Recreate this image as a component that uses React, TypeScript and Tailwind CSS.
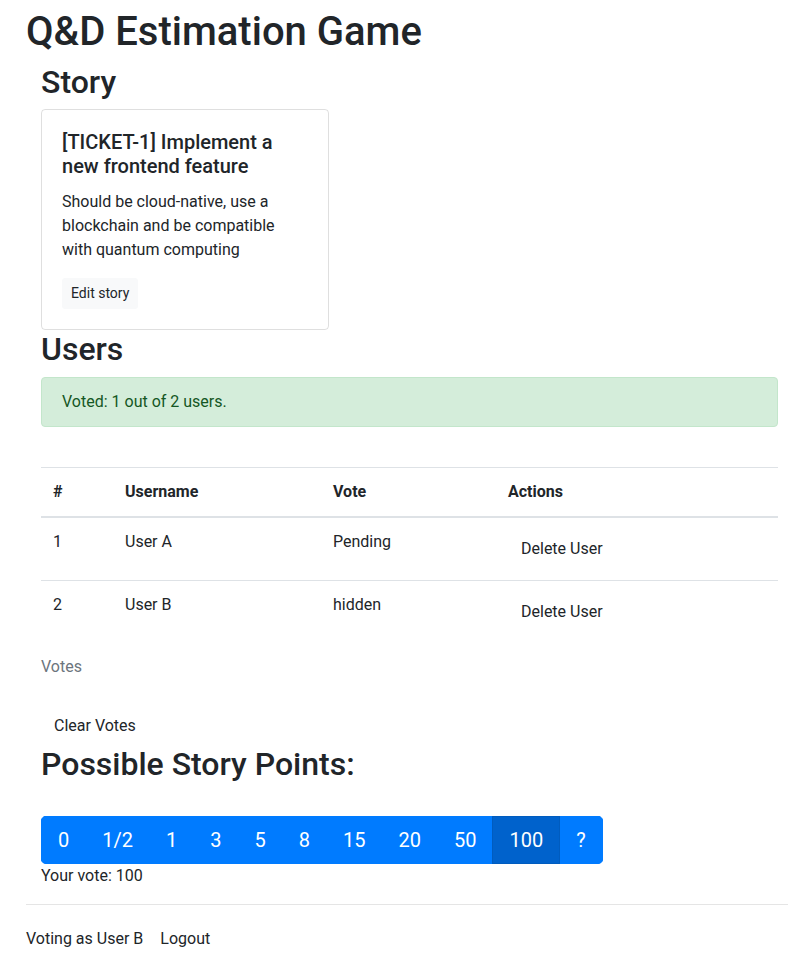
import React from 'react'

const points = ['0', '1/2', '1', '3', '5', '8', '15', '20', '50', '100', '?']

const users = [
  { id: 1, name: 'User A', vote: 'Pending' },
  { id: 2, name: 'User B', vote: 'hidden' },
]

export default function App() {
  const selected = '100'

  return (
    <div className="min-h-screen bg-white pt-2 pl-[26px] text-base leading-6 text-[#212529] [font-family:Roboto,'Liberation_Sans',sans-serif]">
      <h1 className="mb-[7px] text-[40px] leading-[48px] font-medium">Q&amp;D Estimation Game</h1>

      <div className="pr-[10px] pl-[15px]">
        <h2 className="mb-2 text-[32px] leading-[38.4px] font-medium">Story</h2>

        {/* Karte mit der aktuellen Story */}
        <div className="w-[288px] rounded border border-[rgba(0,0,0,0.125)] p-5">
          <h5 className="mb-3 text-xl leading-6 font-medium">[TICKET-1] Implement a new frontend feature</h5>
          <p className="mb-4">Should be cloud-native, use a blockchain and be compatible with quantum computing</p>
          <button className="rounded-[3px] border border-[#f8f9fa] bg-[#f8f9fa] px-2 py-1 text-sm leading-[21px] text-[#212529]">
            Edit story
          </button>
        </div>

        <h2 className="mb-2 text-[32px] leading-[38.4px] font-medium">Users</h2>
        <div className="mb-[40px] rounded border border-[#c3e6cb] bg-[#d4edda] px-5 py-3 text-[#155724]">
          Voted: 1 out of 2 users.
        </div>

        <table className="mb-4 w-full border-collapse text-left">
          <caption className="caption-bottom py-3 text-left text-[#6c757d]">Votes</caption>
          <thead>
            <tr>
              <th className="w-[72px] border-t border-b-2 border-[#dee2e6] p-3 align-bottom font-bold">#</th>
              <th className="w-[208px] border-t border-b-2 border-[#dee2e6] p-3 align-bottom font-bold">Username</th>
              <th className="w-[175px] border-t border-b-2 border-[#dee2e6] p-3 align-bottom font-bold">Vote</th>
              <th className="border-t border-b-2 border-[#dee2e6] p-3 align-bottom font-bold">Actions</th>
            </tr>
          </thead>
          <tbody>
            {users.map((u) => (
              <tr key={u.id}>
                <td className="border-t border-[#dee2e6] p-3 align-top">{u.id}</td>
                <td className="border-t border-[#dee2e6] p-3 align-top">{u.name}</td>
                <td className="border-t border-[#dee2e6] p-3 align-top">{u.vote}</td>
                <td className="border-t border-[#dee2e6] p-3 align-top">
                  <button className="rounded border border-transparent px-3 py-1.5 leading-6 text-[#212529]">Delete User</button>
                </td>
              </tr>
            ))}
          </tbody>
        </table>

        <button className="rounded border border-transparent px-3 py-1.5 leading-6 text-[#212529]">Clear Votes</button>

        <h2 className="mb-2 text-[32px] leading-[38.4px] font-medium">Possible Story Points:</h2>

        {/* Auswahl der Punkte */}
        <div className="mt-[33px]">
          <div className="inline-flex overflow-hidden rounded-[5px]">
            {points.map((p, i) => (
              <button
                key={p}
                className={
                  (i > 0 ? '-ml-px ' : '') +
                  (p === selected
                    ? 'relative border border-[#005cbf] bg-[#0062cc] px-4 py-2 text-xl leading-[30px] text-white'
                    : 'border border-[#007bff] bg-[#007bff] px-4 py-2 text-xl leading-[30px] text-white')
                }
              >
                {p}
              </button>
            ))}
          </div>
        </div>
        <p>Your vote: 100</p>
      </div>

      <hr className="mt-4 border-t border-[rgba(0,0,0,0.1)]" />

      <div className="mt-[15px] flex items-center gap-1">
        <span>Voting as User B</span>
        <button className="rounded border border-transparent px-3 py-1.5 leading-6 text-[#212529]">Logout</button>
      </div>
    </div>
  )
}
